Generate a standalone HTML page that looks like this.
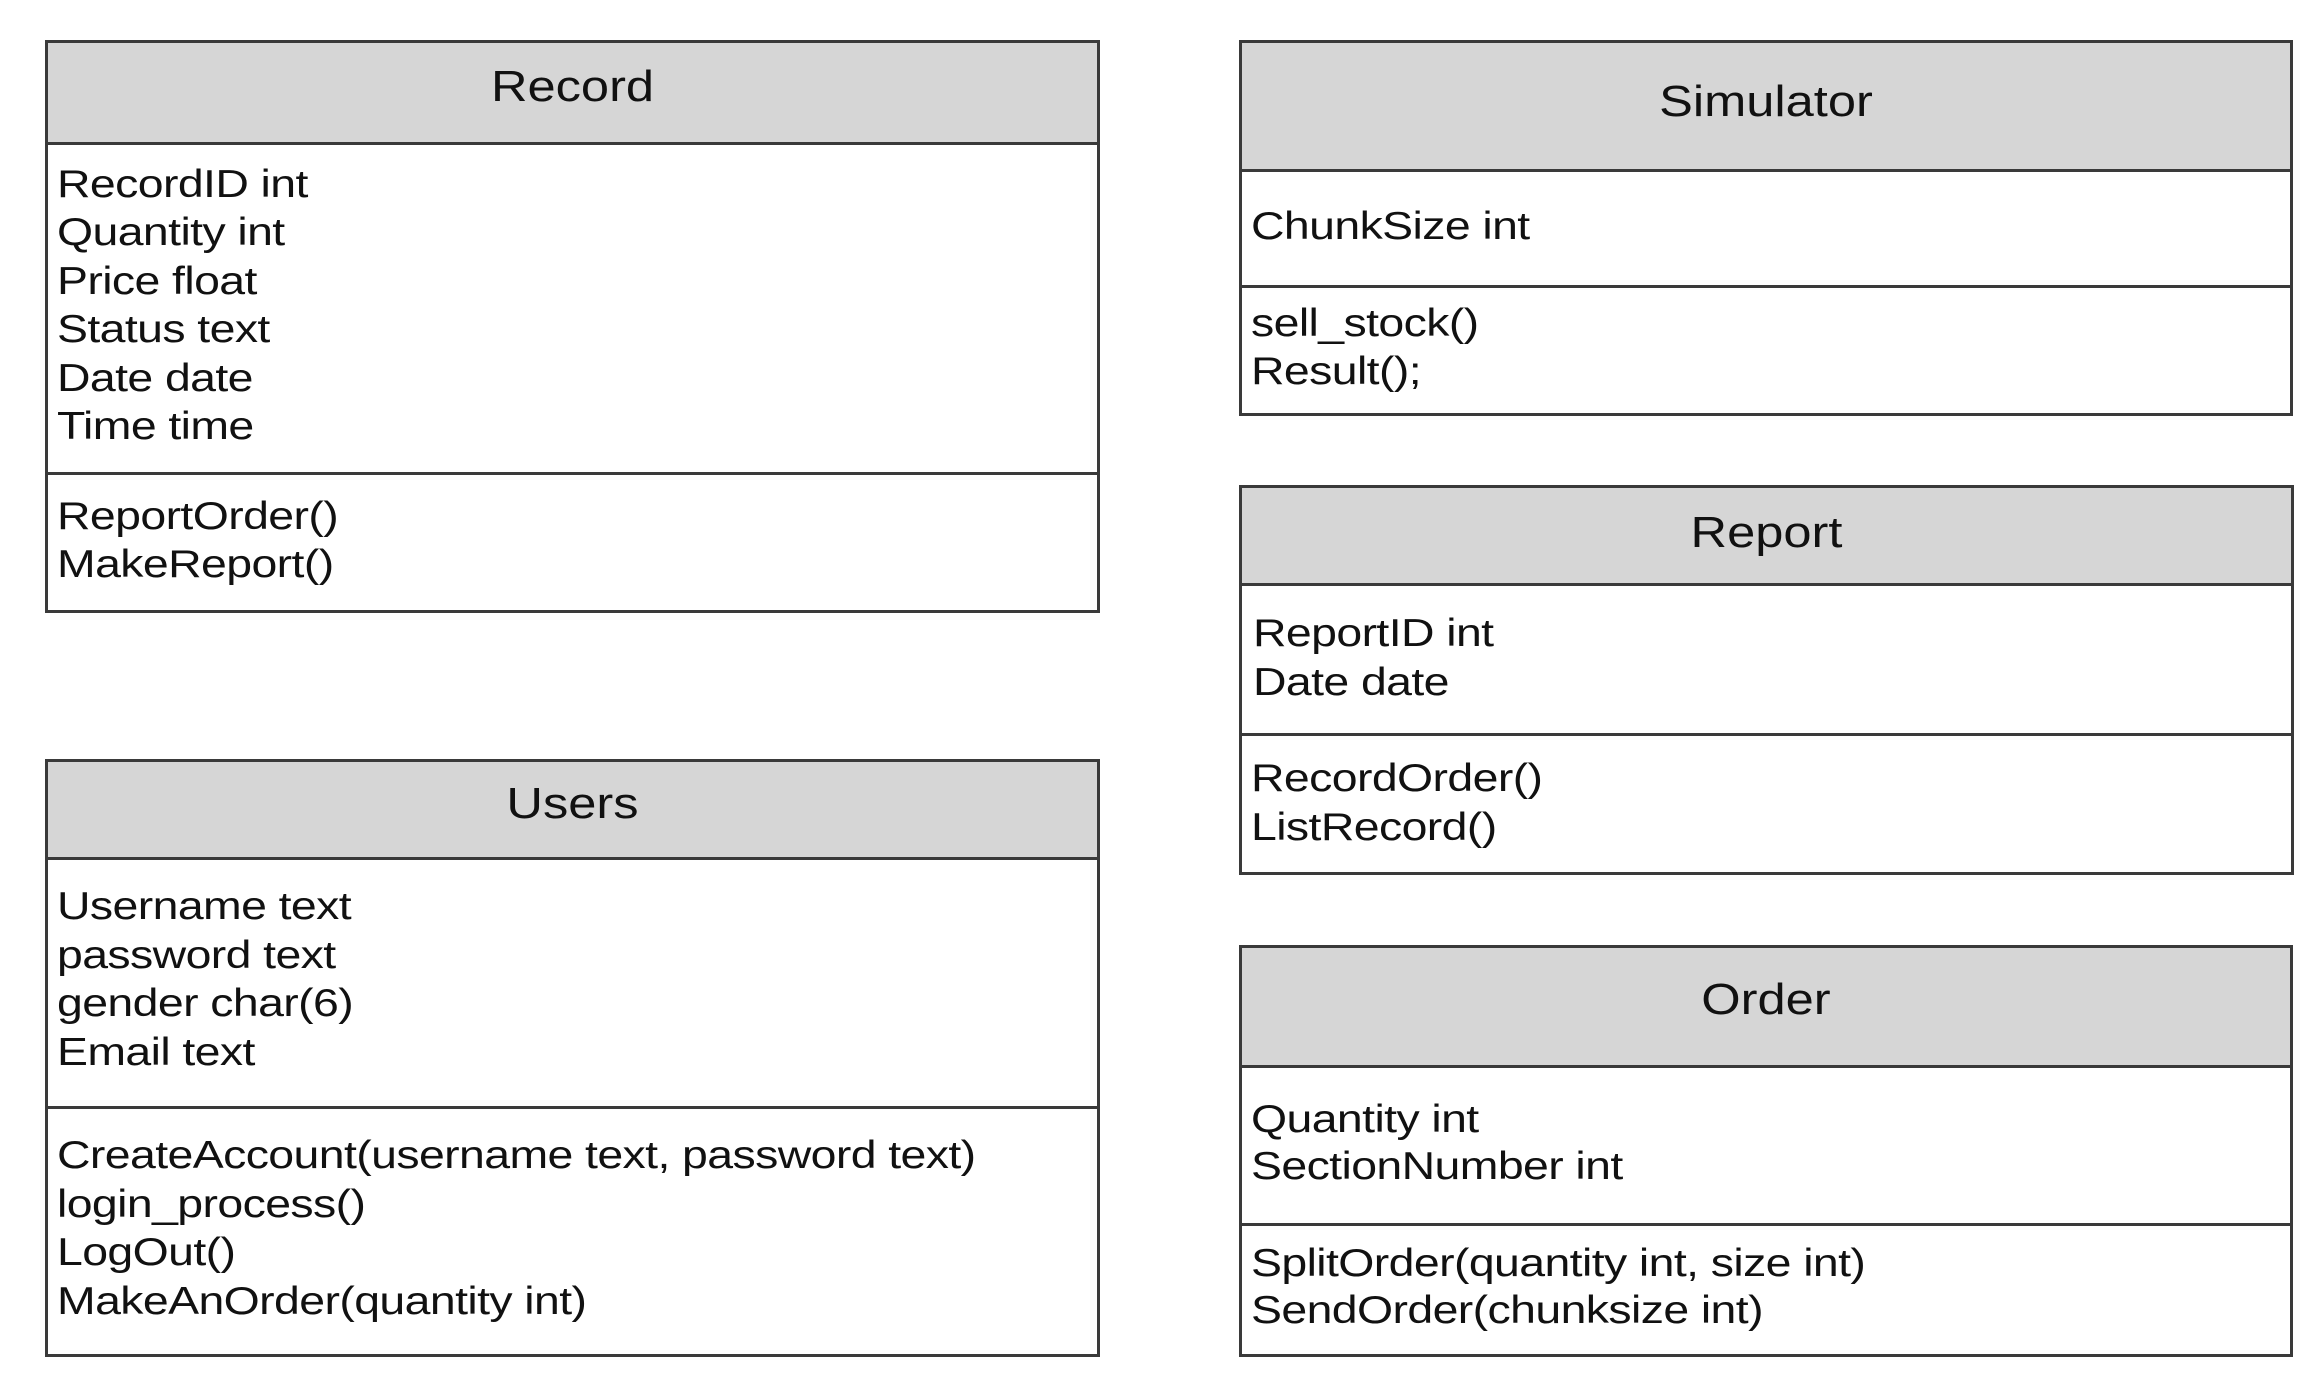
<!DOCTYPE html>
<html><head><meta charset="utf-8"><style>
html,body{margin:0;padding:0;background:#fff;}
body{width:2324px;height:1396px;position:relative;overflow:hidden;font-family:"Liberation Sans",sans-serif;color:#111;}
.b{position:absolute;border:3px solid #3a3a3a;box-sizing:border-box;background:#fff;}
.h{position:absolute;background:#d6d6d6;box-sizing:border-box;border:3px solid #3a3a3a;}
.l{position:absolute;height:3px;background:#3a3a3a;}
.t{position:absolute;height:48px;line-height:48px;font-size:39px;white-space:nowrap;letter-spacing:-0.5px;transform:scaleX(1.19);transform-origin:0 50%;}
.c{position:absolute;height:50px;line-height:50px;font-size:44px;text-align:center;white-space:nowrap;transform:scaleX(1.15);transform-origin:50% 50%;}
</style></head><body>

<!-- Record -->
<div class="b" style="left:45px;top:40px;width:1055px;height:573px;"></div>
<div class="h" style="left:45px;top:40px;width:1055px;height:105px;"></div>
<div class="l" style="left:45px;top:472px;width:1055px;"></div>
<div class="c" style="left:45px;top:62px;width:1055px;">Record</div>
<div class="t" style="left:57px;top:161px;">RecordID int</div>
<div class="t" style="left:57px;top:209px;">Quantity int</div>
<div class="t" style="left:57px;top:258px;">Price float</div>
<div class="t" style="left:57px;top:306px;">Status text</div>
<div class="t" style="left:57px;top:355px;">Date date</div>
<div class="t" style="left:57px;top:403px;">Time time</div>
<div class="t" style="left:57px;top:493px;">ReportOrder()</div>
<div class="t" style="left:57px;top:541px;">MakeReport()</div>

<!-- Users -->
<div class="b" style="left:45px;top:759px;width:1055px;height:598px;"></div>
<div class="h" style="left:45px;top:759px;width:1055px;height:101px;"></div>
<div class="l" style="left:45px;top:1106px;width:1055px;"></div>
<div class="c" style="left:45px;top:779px;width:1055px;">Users</div>
<div class="t" style="left:57px;top:883px;">Username text</div>
<div class="t" style="left:57px;top:932px;">password text</div>
<div class="t" style="left:57px;top:980px;">gender char(6)</div>
<div class="t" style="left:57px;top:1029px;">Email text</div>
<div class="t" style="left:57px;top:1132px;">CreateAccount(username text, password text)</div>
<div class="t" style="left:57px;top:1181px;">login_process()</div>
<div class="t" style="left:57px;top:1229px;">LogOut()</div>
<div class="t" style="left:57px;top:1278px;">MakeAnOrder(quantity int)</div>

<!-- Simulator -->
<div class="b" style="left:1239px;top:40px;width:1054px;height:376px;"></div>
<div class="h" style="left:1239px;top:40px;width:1054px;height:132px;"></div>
<div class="l" style="left:1239px;top:285px;width:1054px;"></div>
<div class="c" style="left:1239px;top:77px;width:1054px;">Simulator</div>
<div class="t" style="left:1251px;top:203px;">ChunkSize int</div>
<div class="t" style="left:1251px;top:300px;">sell_stock()</div>
<div class="t" style="left:1251px;top:348px;">Result();</div>

<!-- Report -->
<div class="b" style="left:1239px;top:485px;width:1055px;height:390px;"></div>
<div class="h" style="left:1239px;top:485px;width:1055px;height:101px;"></div>
<div class="l" style="left:1239px;top:733px;width:1055px;"></div>
<div class="c" style="left:1239px;top:508px;width:1055px;">Report</div>
<div class="t" style="left:1253px;top:610px;">ReportID int</div>
<div class="t" style="left:1253px;top:659px;">Date date</div>
<div class="t" style="left:1251px;top:755px;">RecordOrder()</div>
<div class="t" style="left:1251px;top:804px;">ListRecord()</div>

<!-- Order -->
<div class="b" style="left:1239px;top:945px;width:1054px;height:412px;"></div>
<div class="h" style="left:1239px;top:945px;width:1054px;height:123px;"></div>
<div class="l" style="left:1239px;top:1223px;width:1054px;"></div>
<div class="c" style="left:1239px;top:975px;width:1054px;">Order</div>
<div class="t" style="left:1251px;top:1096px;">Quantity int</div>
<div class="t" style="left:1251px;top:1143px;">SectionNumber int</div>
<div class="t" style="left:1251px;top:1240px;">SplitOrder(quantity int, size int)</div>
<div class="t" style="left:1251px;top:1287px;">SendOrder(chunksize int)</div>

</body></html>
